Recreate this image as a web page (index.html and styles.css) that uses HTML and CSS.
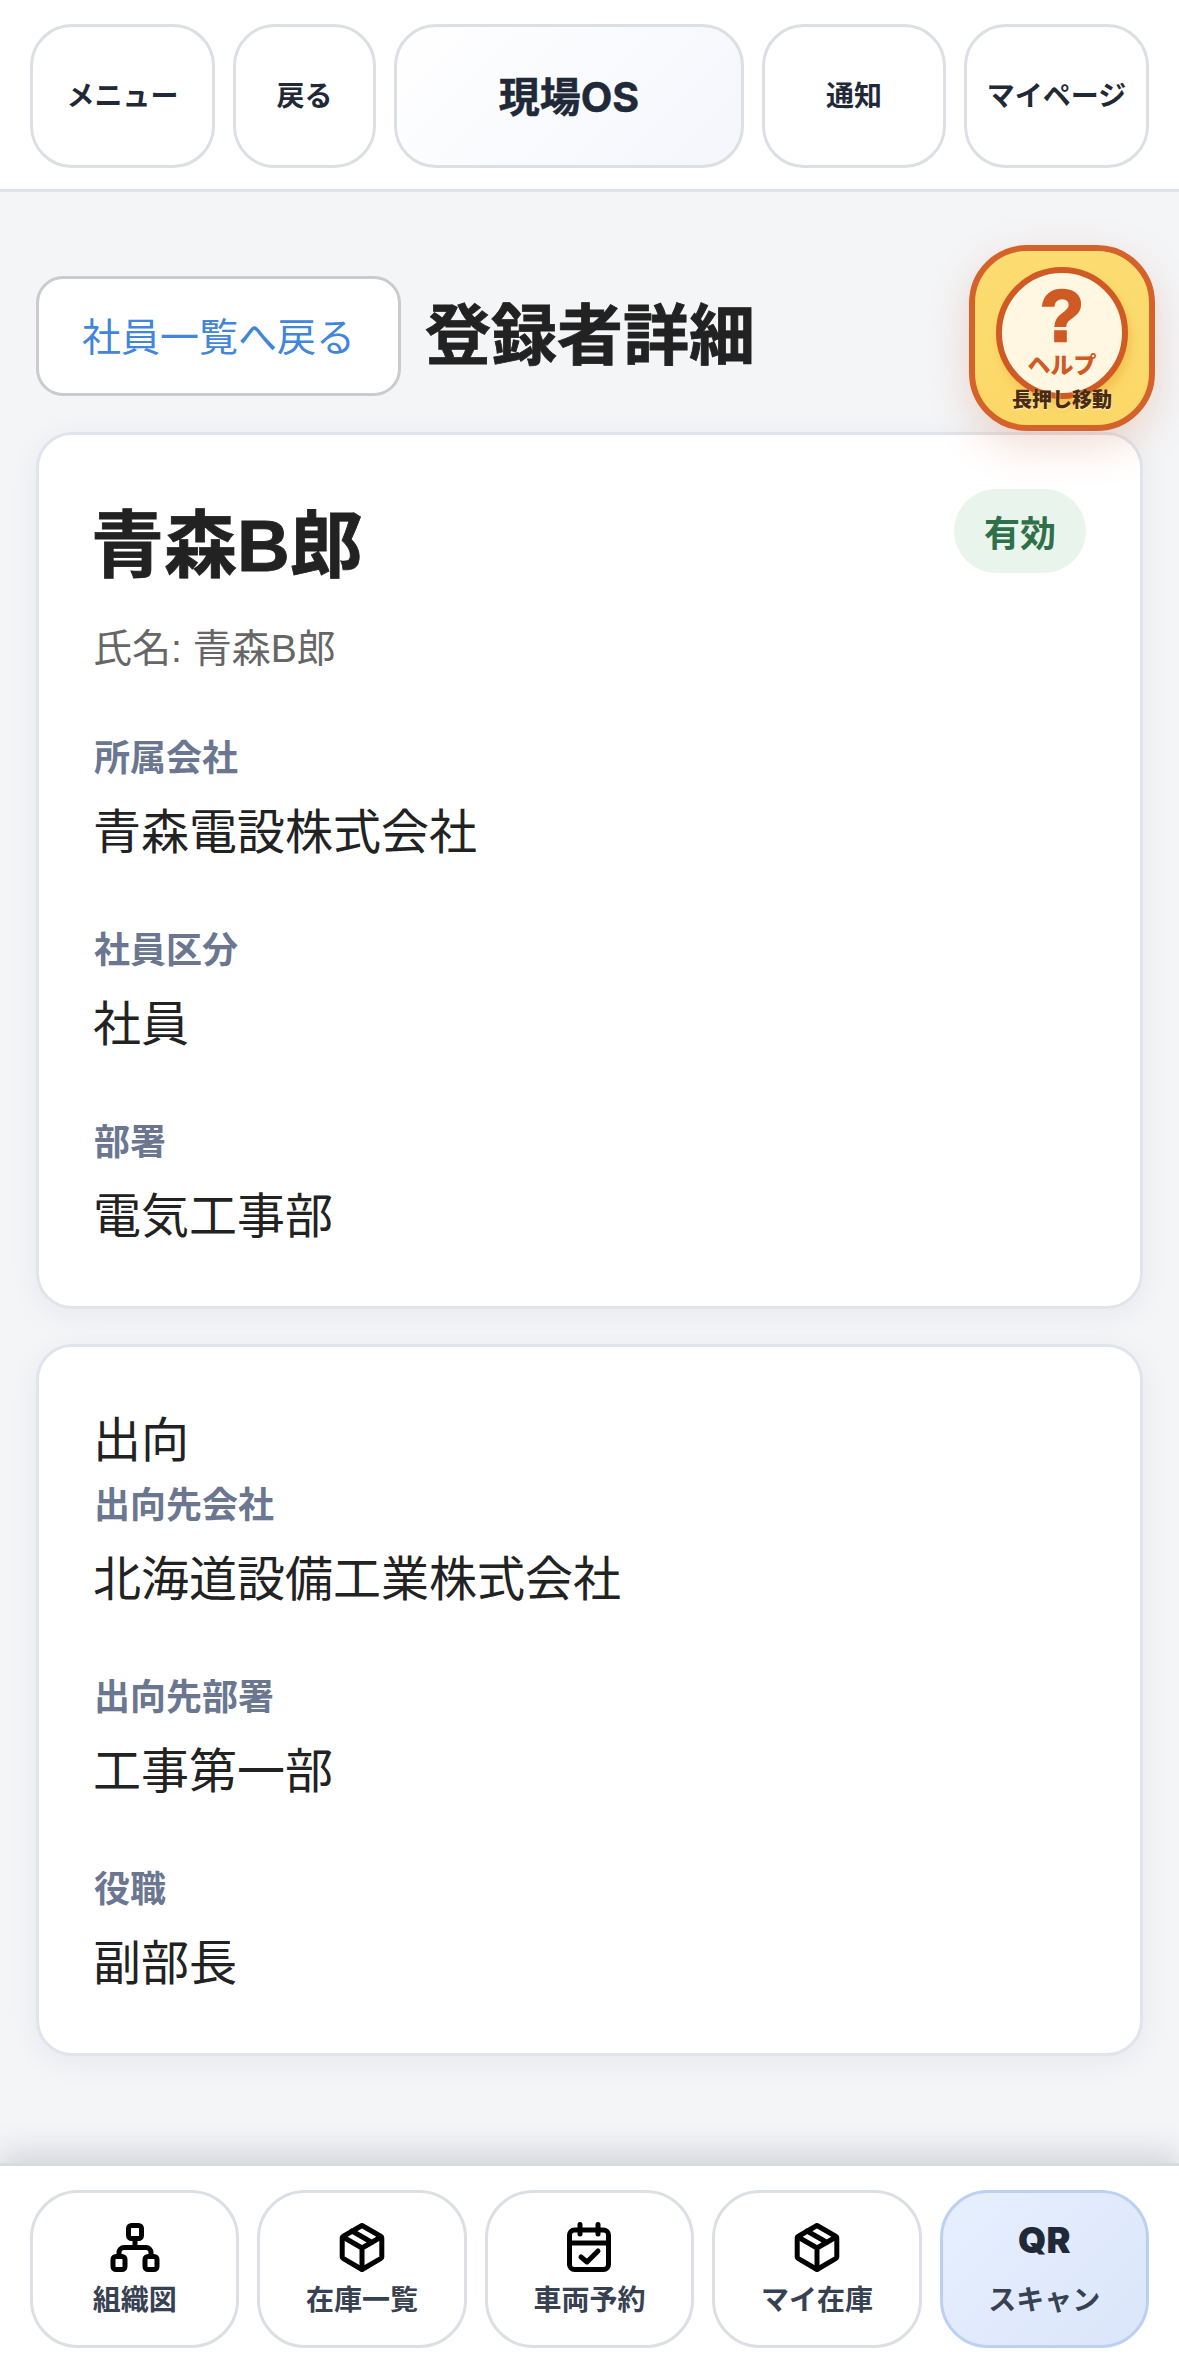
FILE: index.html
```html
<!DOCTYPE html>
<html lang="ja">
<head>
<meta charset="utf-8">
<title>登録者詳細</title>
<link rel="stylesheet" href="styles.css">
</head>
<body>
<div class="app">
  <header class="topbar">
    <a class="top-btn">メニュー</a>
    <a class="top-btn">戻る</a>
    <a class="top-btn top-title">現場OS</a>
    <a class="top-btn">通知</a>
    <a class="top-btn">マイページ</a>
  </header>

  <main class="main">
    <div class="title-row">
      <a class="back-link">社員一覧へ戻る</a>
      <h1 class="page-title">登録者詳細</h1>
    </div>

    <section class="card">
      <div class="card-head">
        <h2 class="person-name">青森B郎</h2>
        <span class="badge">有効</span>
      </div>
      <p class="person-sub">氏名: 青森B郎</p>
      <div class="field first-field">
        <div class="field-label">所属会社</div>
        <div class="field-value">青森電設株式会社</div>
      </div>
      <div class="field">
        <div class="field-label">社員区分</div>
        <div class="field-value">社員</div>
      </div>
      <div class="field">
        <div class="field-label">部署</div>
        <div class="field-value">電気工事部</div>
      </div>
    </section>

    <section class="card">
      <div class="section-name">出向</div>
      <div class="field">
        <div class="field-label">出向先会社</div>
        <div class="field-value">北海道設備工業株式会社</div>
      </div>
      <div class="field">
        <div class="field-label">出向先部署</div>
        <div class="field-value">工事第一部</div>
      </div>
      <div class="field">
        <div class="field-label">役職</div>
        <div class="field-value">副部長</div>
      </div>
    </section>
  </main>

  <nav class="bottom-nav">
    <a class="nav-btn">
      <svg class="nav-icon" viewBox="0 0 50 50"><rect x="18.5" y="3.5" width="13" height="13" rx="3"/><rect x="3" y="34.5" width="12" height="13" rx="3"/><rect x="35" y="34.5" width="12" height="13" rx="3"/><path d="M25 16.500v9M9 34.500v-4a5 5 0 0 1 5-5h22a5 5 0 0 1 5 5v4"/></svg>
      <span class="nav-label">組織図</span>
    </a>
    <a class="nav-btn">
      <svg class="nav-icon" viewBox="0 0 50 50"><path d="M25 3.500L44 14.500a1.500 1.500 0 0 1 .8 1.300V35a1.500 1.500 0 0 1-.8 1.300L25 47.500 6 36.300a1.500 1.500 0 0 1-.8-1.300V15.800a1.500 1.500 0 0 1 .8-1.300z"/><path d="M6 15l19 11 19-11M25 26v21M15 9l20 11.500"/></svg>
      <span class="nav-label">在庫一覧</span>
    </a>
    <a class="nav-btn">
      <svg class="nav-icon" viewBox="0 0 50 50"><rect x="5.500" y="8" width="39" height="39.500" rx="5"/><path d="M5.500 21h39M16 2.500V12M34 2.500V12M17 35l6 5 11-11"/></svg>
      <span class="nav-label">車両予約</span>
    </a>
    <a class="nav-btn">
      <svg class="nav-icon" viewBox="0 0 50 50"><path d="M25 3.500L44 14.500a1.500 1.500 0 0 1 .8 1.300V35a1.500 1.500 0 0 1-.8 1.300L25 47.500 6 36.300a1.500 1.500 0 0 1-.8-1.300V15.800a1.500 1.500 0 0 1 .8-1.300z"/><path d="M6 15l19 11 19-11M25 26v21M15 9l20 11.500"/></svg>
      <span class="nav-label">マイ在庫</span>
    </a>
    <a class="nav-btn nav-btn-active">
      <span class="nav-qr">QR</span>
      <span class="nav-label">スキャン</span>
    </a>
  </nav>

  <div class="help-fab">
    <div class="help-circle">
      <span class="help-mark">?</span>
      <span class="help-word">ヘルプ</span>
    </div>
    <span class="help-caption">長押し移動</span>
  </div>
</div>
</body>
</html>
```
FILE: styles.css
```css
* { box-sizing: border-box; }
html, body { margin: 0; padding: 0; }
body {
  font-family: "Liberation Sans", "Noto Sans CJK JP", sans-serif;
  color: #222;
  background: #f4f5f7;
}
.app {
  position: relative;
  width: 1179px;
  height: 2379px;
  display: flex;
  flex-direction: column;
  overflow: hidden;
}
.topbar {
  flex: none;
  height: 192px;
  padding: 24px 30px 0;
  display: grid;
  grid-template-columns: 185px 143px 1fr 184px 185px;
  column-gap: 18px;
  align-items: start;
  background: #fff;
  border-bottom: 3px solid #dfe2e8;
}
.top-btn {
  height: 144px;
  padding-bottom: 5px;
  display: flex;
  align-items: center;
  justify-content: center;
  border: 3px solid #dcdfe4;
  border-radius: 42px;
  background: #fff;
  font-family: "Inter", "Noto Sans CJK JP", sans-serif;
  font-size: 28px;
  font-weight: 700;
  color: #1f2937;
  white-space: nowrap;
}
.top-title {
  font-size: 41px;
  -webkit-text-stroke: 0.5px #1f2937;
  background: linear-gradient(135deg, #ffffff, #f4f6fc);
}
.main {
  flex: 1;
  min-height: 0;
  padding: 84px 36px 0;
}
.title-row {
  display: flex;
  align-items: center;
  gap: 24px;
  margin-bottom: 36px;
}
.back-link {
  width: 365px;
  height: 120px;
  padding-bottom: 4px;
  display: flex;
  align-items: center;
  justify-content: center;
  border: 3px solid #c9cbce;
  border-radius: 27px;
  background: #fff;
  font-size: 39px;
  color: #4285dc;
}
.page-title {
  margin: 0;
  font-size: 66px;
  font-weight: 700;
  line-height: 1.5;
  color: #222;
  -webkit-text-stroke: 0.8px #222;
}
.card {
  margin-bottom: 35px;
  padding: 54px 54px 53px 54px;
  background: #fff;
  border: 3px solid #e1e4ea;
  border-radius: 36px;
  box-shadow: 0 6px 30px rgba(30, 40, 70, 0.06);
}
.card-head {
  display: flex;
  justify-content: space-between;
  align-items: flex-start;
}
.person-name {
  margin: 3px 0 0 -2px;
  font-size: 73px;
  font-weight: 700;
  line-height: 108px;
  color: #222;
  -webkit-text-stroke: 0.8px #222;
}
.badge {
  height: 84px;
  padding: 0 30px;
  display: flex;
  align-items: center;
  border-radius: 42px;
  background: #e9f5ec;
  font-size: 36px;
  font-weight: 700;
  color: #2f6f4a;
}
.person-sub {
  margin: 20px 0 0;
  font-size: 39px;
  line-height: 58px;
  color: #666;
}
.first-field { margin-top: 54px; }
.section-name {
  margin-top: 4px;
  font-size: 48px;
  line-height: 72px;
  color: #222;
}
.field + .field { margin-top: 55px; }
.section-name + .field { margin-top: 2px; }
.field-label {
  margin-left: 1px;
  font-size: 36px;
  font-weight: 700;
  line-height: 54px;
  margin-bottom: 11px;
  color: #6b7690;
}
.field-value {
  font-size: 48px;
  line-height: 72px;
  color: #222;
}
.bottom-nav {
  flex: none;
  height: 216px;
  padding: 24px 30px 0;
  display: grid;
  grid-template-columns: repeat(5, 1fr);
  column-gap: 18px;
  align-items: start;
  background: #fff;
  border-top: 3px solid #d6dae2;
  box-shadow: 0 -10px 30px rgba(30, 40, 70, 0.16);
}
.nav-btn {
  height: 158px;
  display: flex;
  flex-direction: column;
  align-items: center;
  padding-top: 29px;
  border: 3px solid #dcdfe4;
  border-radius: 48px;
  background: #fff;
}
.nav-btn-active {
  background: linear-gradient(135deg, #e6effd, #dbe6fb);
  border-color: #bcd0f2;
}
.nav-icon {
  width: 50px;
  height: 50px;
  fill: none;
  stroke: #000;
  stroke-width: 5;
  stroke-linecap: round;
  stroke-linejoin: round;
}
.nav-qr {
  height: 50px;
  padding-bottom: 14px;
  display: flex;
  align-items: center;
  font-family: "Inter", sans-serif;
  font-size: 36px;
  font-weight: 900;
  color: #1f2937;
}
.nav-label {
  margin-top: 8px;
  font-family: "Inter", "Noto Sans CJK JP", sans-serif;
  font-size: 28px;
  font-weight: 600;
  line-height: 40px;
  color: #374151;
}
.help-fab {
  position: absolute;
  left: 969px;
  top: 245px;
  width: 186px;
  height: 186px;
  display: flex;
  flex-direction: column;
  align-items: center;
  padding-top: 16px;
  border: 6px solid #d4622a;
  border-radius: 58px;
  background: linear-gradient(180deg, #fcdd72, #fbd766);
  box-shadow: 0 14px 42px rgba(200, 90, 40, 0.22);
}
.help-circle {
  flex: none;
  width: 132px;
  height: 132px;
  padding-top: 10px;
  display: flex;
  flex-direction: column;
  align-items: center;
  border: 6px solid #d05a24;
  border-radius: 50%;
  background: #fff7e1;
  box-shadow: 3px 6px 8px rgba(225, 150, 40, 0.35);
}
.help-mark {
  font-family: "Liberation Sans", sans-serif;
  font-size: 72px;
  font-weight: 700;
  line-height: 67px;
  color: #d05a24;
  -webkit-text-stroke: 2.5px #d05a24;
}
.help-word {
  font-family: "Noto Sans CJK JP", sans-serif;
  font-size: 23px;
  font-weight: 900;
  line-height: 26px;
  color: #d05a24;
}
.help-caption {
  margin-top: -13px;
  position: relative;
  font-family: "Noto Sans CJK JP", sans-serif;
  font-size: 20px;
  font-weight: 900;
  line-height: 26px;
  color: #4b2a0f;
  white-space: nowrap;
  text-shadow: 0 1px 2px rgba(255, 245, 200, 0.9);
}
```
